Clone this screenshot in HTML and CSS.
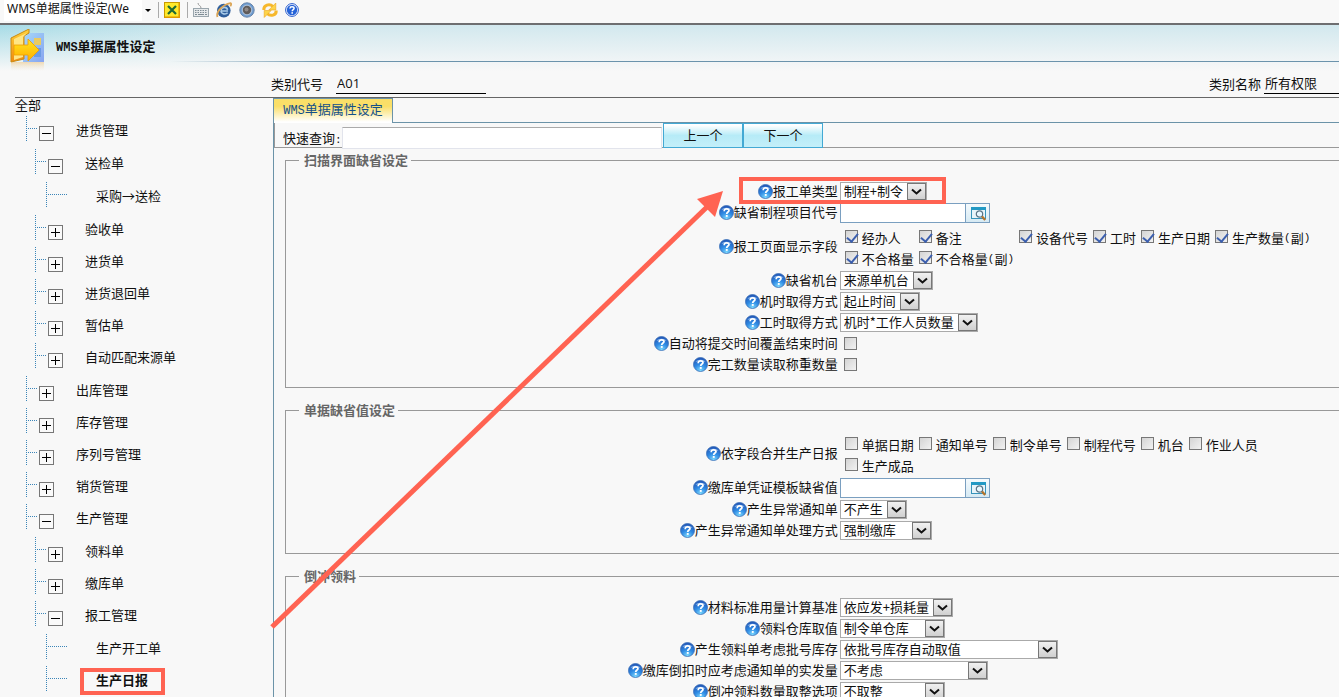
FILE: index.html
```html
<!DOCTYPE html>
<html lang="zh-CN">
<head>
<meta charset="utf-8">
<title>WMS单据属性设定</title>
<link rel="stylesheet" href="styles.css">
</head>
<body>
<svg class="defs" aria-hidden="true">
  <defs>
    <radialGradient id="blueBall" cx=".5" cy=".95" r=".9">
      <stop offset="0" stop-color="#7fdcff"/><stop offset=".5" stop-color="#2f8be4"/><stop offset="1" stop-color="#2358b8"/>
    </radialGradient>
    <linearGradient id="folder" x1="0" y1="0" x2="0" y2="1">
      <stop offset="0" stop-color="#ffd23a"/><stop offset="1" stop-color="#f08a10"/>
    </linearGradient>
    <linearGradient id="arrowFill" x1="0" y1="0" x2="0" y2="1">
      <stop offset="0" stop-color="#ffe620"/><stop offset="1" stop-color="#ffae00"/>
    </linearGradient>
    <linearGradient id="panelFill" x1="0" y1="0" x2="1" y2="1">
      <stop offset="0" stop-color="#a6d8f8"/><stop offset="1" stop-color="#86a4f0"/>
    </linearGradient>
    <linearGradient id="shade" x1="0" y1="0" x2="0" y2="1">
      <stop offset="0" stop-color="#f6c070" stop-opacity=".5"/><stop offset="1" stop-color="#f6e0c0" stop-opacity="0"/>
    </linearGradient>
    <linearGradient id="btnFill" x1="0" y1="0" x2="0" y2="1">
      <stop offset="0" stop-color="#f2f2f2"/><stop offset="1" stop-color="#cfcfcf"/>
    </linearGradient>
  </defs>
  <symbol id="help" viewBox="0 0 15 15">
    <circle cx="7.5" cy="7.5" r="7" fill="url(#blueBall)" stroke="#3a70b8" stroke-width=".8"/>
    <path d="M2.500 5C3.500 2 11.500 2 12.500 5C10 4 5 4 2.500 5Z" fill="#9cc8f4" opacity=".7"/>
    <path d="M5.2 6.2C5.2 4.4 6.3 3.8 7.6 3.800C9 3.800 10 4.500 10 5.500C10 7.100 7.700 7 7.700 9" fill="none" stroke="#fff" stroke-width="1.700"/>
    <rect x="6.8" y="10" width="1.9" height="1.9" fill="#fff"/>
  </symbol>
  <symbol id="drop" viewBox="0 0 19 17">
    <rect x=".5" y=".5" width="18" height="16" fill="url(#btnFill)" stroke="#777"/>
    <path d="M5 6.5L9.5 10.5L14 6.5" fill="none" stroke="#111" stroke-width="2"/>
  </symbol>
  <symbol id="lookup" viewBox="0 0 17 15">
    <rect x="1.5" y="1.5" width="14" height="11" fill="#e8f4fa" stroke="#3793ba"/>
    <rect x="1" y="1" width="15" height="3" fill="#2299c4"/>
    <circle cx="9.5" cy="8" r="3.2" fill="#e8f7ff" stroke="#597486" stroke-width="1.2"/>
    <path d="M12 10.5L15.2 14" stroke="#b4742c" stroke-width="2.4"/>
  </symbol>
  <symbol id="plus" viewBox="0 0 13 13"><path d="M2 6.5H11M6.5 2V11" stroke="#000"/></symbol>
  <symbol id="minus" viewBox="0 0 13 13"><path d="M2 6.5H11" stroke="#000"/></symbol>
</svg>

<header>
  <nav class="toolbar" aria-label="工具栏">
    <select class="window-pick" aria-label="窗口"><option>WMS单据属性设定(We</option></select>
    <svg class="caret" width="6" height="3" viewBox="0 0 6 3"><path d="M0 0H6L3 3Z" fill="#000"/></svg>
    <i class="sep"></i>
    <button class="tool" aria-label="关闭"><svg width="16" height="16" viewBox="0 0 16 16"><rect x=".5" y=".5" width="15" height="15" fill="#ffe92a" stroke="#c99a00"/><path d="M.8 15.2H15.2V.8" fill="none" stroke="#e09a00" stroke-width="1.5"/><path d="M4 4L12 12M12 4L4 12" stroke="#1d6a35" stroke-width="2.2"/></svg></button>
    <i class="sep"></i>
    <button class="tool" aria-label="键盘"><svg width="16" height="16" viewBox="0 0 16 16"><path d="M8 6C8 3 5 4 5 1" fill="none" stroke="#999"/><rect x=".5" y="6.5" width="15" height="8" fill="#e6e9eb" stroke="#9aa6ad"/><path d="M2 8.5H14M2 10.5H14" stroke="#7e8b93" stroke-width="1.2" stroke-dasharray="1.5 1"/><path d="M2 12.5H4M5 12.5H11M12 12.5H14" stroke="#7e8b93" stroke-width="1.2"/></svg></button>
    <button class="tool" aria-label="浏览器"><svg width="16" height="16" viewBox="0 0 16 16"><circle cx="7.8" cy="8.6" r="6.8" fill="#2f5f9c"/><path d="M12 9H5M5 8.500C5 4.600 11 4.400 11.500 7.800M5 9C5.200 12.200 9.800 12.800 11.600 10.800" fill="none" stroke="#a9cbe8" stroke-width="1.600"/><path d="M1.500 15C-.5 10 7 2.500 14.500 1.200C15.600 1.500 15.200 3 14.300 4.200" fill="none" stroke="#dba658" stroke-width="1.800"/></svg></button>
    <button class="tool" aria-label="镜头"><svg width="16" height="16" viewBox="0 0 16 16"><circle cx="8" cy="8" r="7.2" fill="#6a9bd2" stroke="#6b86a8"/><circle cx="8" cy="8" r="4.800" fill="#5f5b5a" stroke="#a9bdd6" stroke-width="1.2"/><circle cx="7.500" cy="7.500" r="2" fill="#8f8987"/></svg></button>
    <button class="tool" aria-label="刷新"><svg width="16" height="16" viewBox="0 0 16 16"><path d="M1.800 8C1.500 3 7.500 1.200 11 4.500" fill="none" stroke="#f6b82c" stroke-width="3"/><path d="M13.800 1V8H6.800Z" fill="#fdd44a" stroke="#efa41c" stroke-width=".6"/><path d="M14.200 8.500C14.500 13.500 8.500 14.800 5 11.500" fill="none" stroke="#f6b82c" stroke-width="3"/><path d="M2.200 15.500V8.500H9.200Z" fill="#fdd44a" stroke="#efa41c" stroke-width=".6"/></svg></button>
    <button class="tool" aria-label="帮助"><svg width="14" height="14" viewBox="0 0 14 14"><circle cx="7" cy="7" r="6.4" fill="#fff" stroke="#2458cc" stroke-width="1"/><circle cx="7" cy="7" r="5.2" fill="#2563d8"/><path d="M4.9 5.500C5 4.300 5.900 3.700 7 3.700C8.300 3.700 9.100 4.300 9.100 5.300C9.100 6.700 7.200 6.500 7.200 8.200" fill="none" stroke="#fff" stroke-width="1.5"/><rect x="6.4" y="9.2" width="1.6" height="1.5" fill="#fff"/></svg></button>
  </nav>
  <div class="banner">
    <svg class="logo" width="36" height="42" viewBox="0 0 36 42">
      <rect x="13" y="4" width="21" height="29" fill="url(#panelFill)"/>
      <rect x="24" y="9" width="7" height="7" fill="#e9cb63"/><rect x="24" y="19" width="7" height="9" fill="#6c9be4"/>
      <path d="M1 9L19 0V4L14 7V30L1 33Z" fill="url(#folder)" stroke="#c88a12"/>
      <path d="M4 10L17 4L13 8V28L4 31Z" fill="#ffe583"/>
      <path d="M4 16H18V10L29 21L18 32V26H4Z" fill="url(#arrowFill)" stroke="#efa000" stroke-width=".8"/>
      <rect x="1" y="33" width="33" height="9" fill="url(#shade)"/>
    </svg>
    <h1><span class="lat">WMS</span>单据属性设定</h1>
  </div>
</header>

<div class="record">
  <div class="pair code"><label for="code">类别代号</label><input id="code" value="A01"></div>
  <div class="pair name"><label for="name">类别名称</label><input id="name" value="所有权限"></div>
</div>

<div class="work">
  <aside class="tree">
    <a class="root" href="#">全部</a>
    <ul>
      <li><div class="node"><i></i><button aria-label="折叠"><svg><use href="#minus"/></svg></button><a href="#">进货管理</a></div>
        <ul>
          <li><div class="node"><i></i><button aria-label="折叠"><svg><use href="#minus"/></svg></button><a href="#">送检单</a></div>
            <ul class="leaves"><li><div class="node"><i></i><a href="#">采购→送检</a></div></li></ul>
          </li>
          <li><div class="node"><i></i><button aria-label="展开"><svg><use href="#plus"/></svg></button><a href="#">验收单</a></div></li>
          <li><div class="node"><i></i><button aria-label="展开"><svg><use href="#plus"/></svg></button><a href="#">进货单</a></div></li>
          <li><div class="node"><i></i><button aria-label="展开"><svg><use href="#plus"/></svg></button><a href="#">进货退回单</a></div></li>
          <li><div class="node"><i></i><button aria-label="展开"><svg><use href="#plus"/></svg></button><a href="#">暂估单</a></div></li>
          <li><div class="node"><i></i><button aria-label="展开"><svg><use href="#plus"/></svg></button><a href="#">自动匹配来源单</a></div></li>
        </ul>
      </li>
      <li><div class="node"><i></i><button aria-label="展开"><svg><use href="#plus"/></svg></button><a href="#">出库管理</a></div></li>
      <li><div class="node"><i></i><button aria-label="展开"><svg><use href="#plus"/></svg></button><a href="#">库存管理</a></div></li>
      <li><div class="node"><i></i><button aria-label="展开"><svg><use href="#plus"/></svg></button><a href="#">序列号管理</a></div></li>
      <li><div class="node"><i></i><button aria-label="展开"><svg><use href="#plus"/></svg></button><a href="#">销货管理</a></div></li>
      <li><div class="node"><i></i><button aria-label="折叠"><svg><use href="#minus"/></svg></button><a href="#">生产管理</a></div>
        <ul>
          <li><div class="node"><i></i><button aria-label="展开"><svg><use href="#plus"/></svg></button><a href="#">领料单</a></div></li>
          <li><div class="node"><i></i><button aria-label="展开"><svg><use href="#plus"/></svg></button><a href="#">缴库单</a></div></li>
          <li><div class="node"><i></i><button aria-label="折叠"><svg><use href="#minus"/></svg></button><a href="#">报工管理</a></div>
            <ul class="leaves">
              <li><div class="node"><i></i><a href="#">生产开工单</a></div></li>
              <li><div class="node"><i></i><a class="current" href="#">生产日报</a></div></li>
            </ul>
          </li>
        </ul>
      </li>
    </ul>
  </aside>

  <main>
    <div class="tabs"><button class="tab"><span class="lat">WMS</span>单据属性设定</button></div>
    <div class="panel">
      <div class="search">
        <label for="q">快速查询<span class="lat">:</span></label><input id="q"><button>上一个</button><button>下一个</button>
      </div>

      <fieldset>
        <legend>扫描界面缺省设定</legend>
        <div class="row"><label for="f1"><svg class="help"><use href="#help"/></svg>报工单类型</label><span class="pick"><select id="f1"><option>制程+制令</option></select><svg><use href="#drop"/></svg></span></div>
        <div class="row"><label for="f2"><svg class="help"><use href="#help"/></svg>缺省制程项目代号</label><span class="find"><input id="f2"><button aria-label="查找"><svg><use href="#lookup"/></svg></button></span></div>
        <div class="row" role="group" aria-labelledby="g1"><span class="caption" id="g1"><svg class="help"><use href="#help"/></svg>报工页面显示字段</span>
          <div class="checks">
            <label><input type="checkbox" checked>经办人</label>
            <label><input type="checkbox" checked>备注</label>
            <label><input type="checkbox" checked>设备代号</label>
            <label><input type="checkbox" checked>工时</label>
            <label><input type="checkbox" checked>生产日期</label>
            <label><input type="checkbox" checked>生产数量<span class="lat">(</span>副<span class="lat">)</span></label>
            <label><input type="checkbox" checked>不合格量</label>
            <label><input type="checkbox" checked>不合格量<span class="lat">(</span>副<span class="lat">)</span></label>
          </div>
        </div>
        <div class="row"><label for="f4"><svg class="help"><use href="#help"/></svg>缺省机台</label><span class="pick"><select id="f4"><option>来源单机台</option></select><svg><use href="#drop"/></svg></span></div>
        <div class="row"><label for="f5"><svg class="help"><use href="#help"/></svg>机时取得方式</label><span class="pick"><select id="f5"><option>起止时间</option></select><svg><use href="#drop"/></svg></span></div>
        <div class="row"><label for="f6"><svg class="help"><use href="#help"/></svg>工时取得方式</label><span class="pick"><select id="f6"><option>机时*工作人员数量</option></select><svg><use href="#drop"/></svg></span></div>
        <div class="row"><label for="f7"><svg class="help"><use href="#help"/></svg>自动将提交时间覆盖结束时间</label><input class="single" id="f7" type="checkbox"></div>
        <div class="row"><label for="f8"><svg class="help"><use href="#help"/></svg>完工数量读取称重数量</label><input class="single" id="f8" type="checkbox"></div>
      </fieldset>

      <fieldset>
        <legend>单据缺省值设定</legend>
        <div class="row" role="group" aria-labelledby="g2"><span class="caption" id="g2"><svg class="help"><use href="#help"/></svg>依字段合并生产日报</span>
          <div class="checks">
            <label><input type="checkbox">单据日期</label>
            <label><input type="checkbox">通知单号</label>
            <label><input type="checkbox">制令单号</label>
            <label><input type="checkbox">制程代号</label>
            <label><input type="checkbox">机台</label>
            <label><input type="checkbox">作业人员</label>
            <label><input type="checkbox">生产成品</label>
          </div>
        </div>
        <div class="row"><label for="d1"><svg class="help"><use href="#help"/></svg>缴库单凭证模板缺省值</label><span class="find"><input id="d1"><button aria-label="查找"><svg><use href="#lookup"/></svg></button></span></div>
        <div class="row"><label for="d2"><svg class="help"><use href="#help"/></svg>产生异常通知单</label><span class="pick"><select id="d2"><option>不产生</option></select><svg><use href="#drop"/></svg></span></div>
        <div class="row"><label for="d3"><svg class="help"><use href="#help"/></svg>产生异常通知单处理方式</label><span class="pick small"><select id="d3"><option>强制缴库</option></select><svg><use href="#drop"/></svg></span></div>
      </fieldset>

      <fieldset>
        <legend>倒冲领料</legend>
        <div class="row"><label for="b1"><svg class="help"><use href="#help"/></svg>材料标准用量计算基准</label><span class="pick"><select id="b1"><option>依应发+损耗量</option></select><svg><use href="#drop"/></svg></span></div>
        <div class="row"><label for="b2"><svg class="help"><use href="#help"/></svg>领料仓库取值</label><span class="pick medium"><select id="b2"><option>制令单仓库</option></select><svg><use href="#drop"/></svg></span></div>
        <div class="row"><label for="b3"><svg class="help"><use href="#help"/></svg>产生领料单考虑批号库存</label><span class="pick widest"><select id="b3"><option>依批号库存自动取值</option></select><svg><use href="#drop"/></svg></span></div>
        <div class="row"><label for="b4"><svg class="help"><use href="#help"/></svg>缴库倒扣时应考虑通知单的实发量</label><span class="pick wide"><select id="b4"><option>不考虑</option></select><svg><use href="#drop"/></svg></span></div>
        <div class="row"><label for="b5"><svg class="help"><use href="#help"/></svg>倒冲领料数量取整选项</label><span class="pick medium"><select id="b5"><option>不取整</option></select><svg><use href="#drop"/></svg></span></div>
      </fieldset>
    </div>
  </main>
</div>

<svg class="markup" width="960" height="697" viewBox="0 0 960 697" aria-hidden="true">
  <rect x="741" y="179" width="203" height="23" fill="none" stroke="#ff6352" stroke-width="4"/>
  <path d="M272 627L708 206" stroke="#ff6352" stroke-width="5"/>
  <path d="M723 191L697 199L715 217Z" fill="#ff6352"/>
</svg>
</body>
</html>
```
FILE: styles.css
```css
* { box-sizing: border-box; }

body {
  margin: 0;
  height: 100vh;
  overflow: hidden;
  position: relative;
  background: #f8f8f8;
  color: #111;
  font: 13px/16px "Noto Sans CJK SC", sans-serif;
}

.defs { position: absolute; width: 0; height: 0; }
a { color: inherit; text-decoration: none; }
button, input, select { font: inherit; color: inherit; margin: 0; }
button { padding: 0; }
svg { flex: none; display: block; }
label, legend, a, button { white-space: nowrap; }
.lat { font-family: "Liberation Mono", monospace; font-size: 11px; }

/* Toolbar */
.toolbar {
  display: flex;
  align-items: center;
  height: 25px;
  padding-bottom: 3px;
  border-bottom: 2px solid #6e6e70;
  background: #f8f8f8;
}
.window-pick {
  appearance: none;
  width: 138px;
  height: 22px;
  margin-left: 4px;
  padding: 0 0 2px 3px;
  border: 0;
  background: #fff;
  font-family: "Noto Sans", "Noto Sans CJK SC", sans-serif;
  font-size: 12px;
}
.caret { margin-left: 3px; }
.sep { width: 1px; height: 16px; margin-left: 7px; background: #aaa; }
.tool { margin-left: 7px; border: 0; background: none; }
.sep + .tool { margin-left: 5px; }

/* Banner */
.banner {
  display: flex;
  height: 46px;
  padding-left: 10px;
  background:
    linear-gradient(90deg, transparent 170px, #6b93ac 330px) 0 36px / 100% 1px no-repeat,
    linear-gradient(180deg, transparent, #f8f8f8),
    linear-gradient(90deg, #a6dbe6, #d2e8ee 240px);
}
.logo { margin-top: 4px; }
h1 { margin: 13px 0 0 10px; font-size: 13px; line-height: 16px; }
h1 .lat, .tab .lat { font-size: 12px; }

/* Record header */
.record {
  display: flex;
  justify-content: space-between;
  height: 27px;
  margin-left: 15px;
  padding: 4px 0 3px 256px;
  border-bottom: 1px solid #666;
  overflow: hidden;
}
.pair { display: flex; align-items: center; }
.pair label { padding-bottom: 2px; }
.pair input {
  height: 19px;
  padding: 0 1px 3px;
  border: 0;
  border-bottom: 1px solid #000;
  background: none;
}
.code input { width: 150px; margin-left: 13px; font-family: "Open Sans", sans-serif; font-size: 13px; }
.name input { width: 75px; margin-left: 3px; }

.work { display: grid; grid-template-columns: 273px 1fr; }

/* Tree */
.tree ul { list-style: none; margin: 0; padding: 0; }
.tree > ul { padding-left: 26px; }
.tree ul ul { padding: 1px 0 1px 9px; }
.tree ul .leaves { padding-left: 11px; }
.root { display: block; height: 16px; margin-left: 15px; line-height: 14px; }
.node { display: flex; align-items: center; height: 32px; }
.node i {
  align-self: flex-start;
  width: 11px;
  height: 25px;
  margin-top: 2px;
  padding: 12px 0 0 1px;
  border-left: 1px dotted #3b85b8;
}
.node i::before { content: ""; display: block; border-top: 1px dotted #3b85b8; }
.node button {
  width: 15px;
  height: 15px;
  margin: 7px 0 0 2px;
  border: 1px solid #777;
  background: #fafafa;
}
.node button svg { width: 13px; height: 13px; }
.node a { margin-left: 22px; }
.leaves .node i { width: 21px; }
.leaves .node a { margin-left: 29px; }
.node .current { position: relative; font-weight: bold; }
.current::after {
  content: "";
  position: absolute;
  inset: -4px -17px -7px -16px;
  border: 4px solid #ff6352;
}

/* Tabs and search */
.tabs { display: flex; height: 25px; border-bottom: 1px solid #6b93a8; }
.tab {
  height: 25px;
  width: 120px;
  padding-bottom: 2px;
  border: 1px solid #6b93a8;
  border-bottom: 0;
  background: linear-gradient(#fadf68 30%, #fff 95%);
  color: #145089;
}
.panel { border-left: 1px solid #6b93a8; }
.search {
  display: flex;
  height: 25px;
  padding-left: 8px;
  border-left: 1px solid #999;
  border-bottom: 1px solid #999;
}
.search label { width: 59px; padding-top: 7px; }
.search input {
  width: 320px;
  height: 22px;
  margin: 4px 1px 0 0;
  border: 1px solid #e2e4ec;
  border-top-color: #aaa;
  background: #fff;
}
.search button {
  width: 80px;
  height: 25px;
  padding-bottom: 2px;
  border: 1px solid #43a9d4;
  background: linear-gradient(#fff 5%, #b6ebf7 50%, #c4eff9);
}

/* Setting groups */
fieldset {
  min-width: 0;
  margin: 2px 0 12px 11px;
  padding: 12px 0 13px;
  border: 1px solid #999;
  border-right: 0;
}
legend {
  margin-left: 13px;
  padding: 0 3px 0 5px;
  line-height: 20px;
  font-weight: bold;
  color: #666;
}
.row {
  display: grid;
  grid-template-columns: 21fr 19fr;
  column-gap: 2px;
  align-items: center;
  min-height: 19px;
}
.row + .row { margin-top: 2px; }
.row > label, .caption {
  display: flex;
  justify-content: flex-end;
  align-items: center;
  padding-bottom: 2px;
}
.help { width: 15px; height: 15px; margin-top: 1px; }

.pick { position: relative; justify-self: start; height: 19px; }
.pick select {
  appearance: none;
  display: block;
  width: 100%;
  height: 19px;
  padding: 0 22px 2px 3px;
  border: 1px solid #aaa;
  border-radius: 0;
  background: #fff;
  line-height: 15px;
}
.pick svg {
  position: absolute;
  right: 1px;
  top: 1px;
  width: 19px;
  height: 17px;
  pointer-events: none;
}
.small { width: 92px; }
.medium { width: 105px; }
.wide { width: 148px; }
.widest { width: 218px; }

.find { display: flex; width: 150px; height: 20px; border: 1px solid #7a9fc0; }
.find input { flex: 1; min-width: 0; border: 0; padding: 0 3px; background: #fff; }
.find button {
  width: 24px;
  padding: 1px 0 0 4px;
  border: 0;
  border-left: 1px solid #7a9fc0;
  background: linear-gradient(#f4fafd, #d6eaf4);
}
.find svg { width: 17px; height: 15px; }

input[type="checkbox"] {
  appearance: none;
  flex: none;
  display: grid;
  width: 13px;
  height: 13px;
  border: 1px solid #777;
  background: linear-gradient(135deg, #d4d4d4, #f2f2f2);
}
input[type="checkbox"]:checked::before {
  content: "";
  width: 5px;
  height: 9px;
  margin: 0 0 0 3px;
  border: solid #3c5fae;
  border-width: 0 2px 2px 0;
  transform: rotate(40deg);
}
.single { margin-left: 4px; }
.checks {
  display: grid;
  grid-template-columns: repeat(6, max-content);
  grid-auto-rows: 21px;
  column-gap: 5px;
  height: 44px;
  padding: 2px 0 0 5px;
}
.checks label { display: flex; align-items: center; }
.checks input { margin: 0 4px 2px 0; }

.markup { position: absolute; left: 0; top: 0; pointer-events: none; }
```
